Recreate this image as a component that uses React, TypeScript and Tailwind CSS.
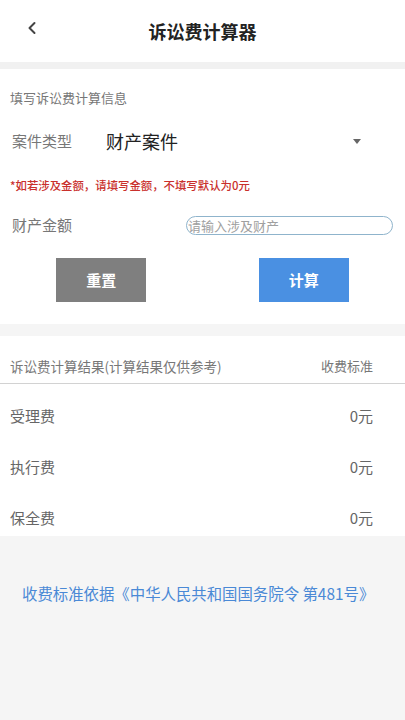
import { ChevronLeft } from "lucide-react";

// 诉讼费计算器 — 单页静态还原
const FONT = { fontFamily: '"Noto Sans CJK SC", "Noto Sans", sans-serif' };

const rows = [
  { name: "受理费", value: "0元" },
  { name: "执行费", value: "0元" },
  { name: "保全费", value: "0元" },
];

export default function App() {
  return (
    <div style={FONT} className="min-h-[720px] w-full bg-[#f5f5f5]">
      {/* 顶部标题栏 */}
      <div className="relative flex h-[62px] items-center justify-center bg-white">
        <button className="absolute left-[22px] top-[18px] text-[#444]" aria-label="返回">
          <ChevronLeft size={20} strokeWidth={2.4} />
        </button>
        <h1 className="text-[18px] font-bold leading-none text-[#222]">诉讼费计算器</h1>
      </div>
      <div className="h-[7px] bg-[#f1f1f1]" />

      {/* 填写信息 */}
      <div className="bg-white pb-[22px] pt-[19px]">
        <div className="px-[10px] text-[13px] leading-[20px] text-[#777]">填写诉讼费计算信息</div>

        <div className="mt-[13px] flex h-[40px] items-center pl-[12px] pr-[44px]">
          <span className="w-[94px] text-[15px] text-[#777]">案件类型</span>
          <span className="flex-1 text-[18px] text-[#222]">财产案件</span>
          <span className="h-0 w-0 border-x-[4.5px] border-t-[5px] border-x-transparent border-t-[#666]" />
        </div>

        <div className="mt-[16px] px-[10px] text-[11.4px] font-medium leading-[16px] text-[#c9302c]">
          *如若涉及金额，请填写金额，不填写默认为0元
        </div>

        <div className="mt-[17px] flex h-[30px] items-center pl-[12px] pr-[12px]">
          <span className="w-[174px] text-[15px] text-[#777]">财产金额</span>
          <input
            placeholder="请输入涉及财产"
            className="h-[19px] min-w-0 flex-1 rounded-full border border-[#8fb4cc] px-[1px] text-[13px] leading-none text-[#333] placeholder:text-[#a0a0a0] outline-none"
          />
        </div>

        <div className="mt-[18px] grid grid-cols-2">
          <div className="flex justify-center">
            <button className="h-[44px] w-[90px] bg-[#7f7f7f] text-[15px] font-semibold text-white">重置</button>
          </div>
          <div className="flex justify-center">
            <button className="h-[44px] w-[90px] bg-[#4a90e2] text-[15px] font-semibold text-white">计算</button>
          </div>
        </div>
      </div>
      <div className="h-[12px]" />

      {/* 计算结果 */}
      <div className="bg-white pb-[8px]">
        <div className="flex items-center justify-between border-b border-[#d2d2d2] pb-[7px] pl-[10px] pr-[32px] pt-[20px]">
          <span className="text-[13.5px] leading-[20px] text-[#777]">诉讼费计算结果(计算结果仅供参考)</span>
          <span className="text-[13px] leading-[20px] text-[#777]">收费标准</span>
        </div>
        <div className="flex flex-col gap-[31px] pl-[10px] pr-[32px] pt-[22px]">
          {rows.map((r) => (
            <div key={r.name} className="flex items-center justify-between text-[15px] leading-[20px] text-[#666]">
              <span>{r.name}</span>
              <span>{r.value}</span>
            </div>
          ))}
        </div>
      </div>

      <div className="mt-[47px] pl-[22px] text-[15.4px] leading-[20px] text-[#4a89d6]">
        收费标准依据《中华人民共和国国务院令 第481号》
      </div>
    </div>
  );
}
